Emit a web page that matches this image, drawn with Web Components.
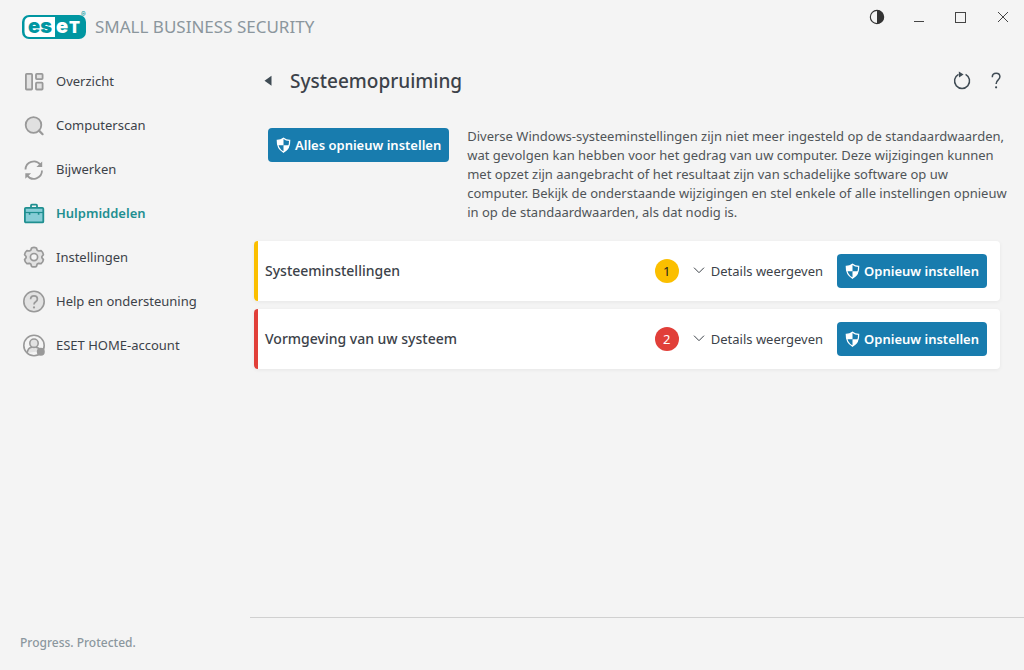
<!DOCTYPE html>
<html lang="nl">
<head>
<meta charset="utf-8">
<meta name="viewport" content="width=device-width, initial-scale=1">
<title>ESET Small Business Security</title>
<style>
  html, body { height: 100%; }
  body { margin: 0; background: #f4f4f4; color: #3c4249; font: 13px/19px "Noto Sans", "Open Sans", sans-serif; }
</style>
</head>
<body>
<app-window>
  <title-bar slot="header"></title-bar>

  <side-nav slot="nav">
    <nav-item icon="overview">Overzicht</nav-item>
    <nav-item icon="scan">Computerscan</nav-item>
    <nav-item icon="update">Bijwerken</nav-item>
    <nav-item icon="tools" active>Hulpmiddelen</nav-item>
    <nav-item icon="settings">Instellingen</nav-item>
    <nav-item icon="help">Help en ondersteuning</nav-item>
    <nav-item icon="account">ESET HOME-account</nav-item>
  </side-nav>

  <page-heading>Systeemopruiming</page-heading>
  <intro-block action="Alles opnieuw instellen">Diverse Windows-systeeminstellingen zijn niet meer ingesteld op de standaardwaarden, wat gevolgen kan hebben voor het gedrag van uw computer. Deze wijzigingen kunnen met opzet zijn aangebracht of het resultaat zijn van schadelijke software op uw computer. Bekijk de onderstaande wijzigingen en stel enkele of alle instellingen opnieuw in op de standaardwaarden, als dat nodig is.</intro-block>
  <setting-card level="warning" count="1">Systeeminstellingen</setting-card>
  <setting-card level="danger" count="2">Vormgeving van uw systeem</setting-card>

  <span slot="tagline">Progress. Protected.</span>
</app-window>

<script>
const ICONS = {
  overview: `<g fill="#e2e2e2" stroke="#999" stroke-width="1.8"><rect x="3.900" y="4.900" width="6.200" height="15.600" rx=".8"/><rect x="14" y="4.900" width="6.600" height="5.200" rx=".8"/><rect x="14" y="13.600" width="6.600" height="6.900" rx=".8"/></g>`,
  scan: `<circle cx="11.500" cy="12" r="7.800" fill="#e0e0e0" stroke="#999" stroke-width="1.800"/><path d="M17 17.600l3.600 3.600" stroke="#999" stroke-width="2.200" stroke-linecap="round"/>`,
  update: `<g fill="none" stroke="#999" stroke-width="1.800"><path d="M3.500 12.500A8.300 8.300 0 0 1 18.300 7.600"/><path d="M20 13.500A8.300 8.300 0 0 1 5.200 18.600"/></g><path d="M20.200 4.400v5.600h-5.800zM3.300 21.800v-5.600h5.800z" fill="#999"/>`,
  tools: `<path d="M9 7V4.500q0-.8.8-.8h4.400q.8 0 .8.800V7" fill="none" stroke="#1f8f90" stroke-width="1.800"/><rect x="2.900" y="6.800" width="18.400" height="14.600" rx="1" fill="#87cdd6" stroke="#1f8f90" stroke-width="1.800"/><path d="M3 11.500h18" stroke="#1f8f90" stroke-width="1.200"/><path d="M7.600 11v2.800M16.600 11v2.800" stroke="#1f8f90" stroke-width="1.600"/>`,
  settings: `<path d="M9.600 2.900q2.400-1.200 4.800 0l.8 2.300 1.400.8 2.500-.4q2 1.600 2.300 4.100L19.900 11.500v1.200l1.500 1.900q-.3 2.500-2.300 4.100l-2.500-.4-1.400.8-.8 2.300q-2.400 1.100-4.800 0l-.8-2.300-1.400-.8-2.500.4q-2-1.600-2.300-4.100l1.500-1.900v-1.200L2.600 9.700q.3-2.500 2.300-4.100l2.500.4 1.400-.8z" fill="#e2e2e2" stroke="#999" stroke-width="1.700" stroke-linejoin="round"/><circle cx="12" cy="12.100" r="3.600" fill="#f4f4f4" stroke="#999" stroke-width="1.700"/>`,
  help: `<circle cx="12" cy="12.500" r="10.200" fill="#e2e2e2" stroke="#999" stroke-width="1.600"/><path d="M8.600 10.300q0-3.400 3.400-3.400 3.400 0 3.400 3 0 1.600-1.700 2.800-1.700 1.100-1.700 2.800" fill="none" stroke="#999" stroke-width="1.700"/><circle cx="12" cy="18.400" r="1.100" fill="#999"/>`,
  account: `<circle cx="12" cy="12.500" r="10.200" fill="#f4f4f4" stroke="#999" stroke-width="1.600"/><path d="M5.200 20q.6-5.400 4.700-5.800h4.200q3.400.3 4.500 3.800" fill="#e2e2e2" stroke="#999" stroke-width="1.600"/><circle cx="12" cy="10.200" r="4.200" fill="#e2e2e2" stroke="#999" stroke-width="1.600"/><circle cx="18.800" cy="18.800" r="4" fill="#999"/>`,
  shield: `<path d="M12 1.800Q8.500 4.600 3.300 4.800q-.5 11.600 8.700 16.600 9.200-5 8.700-16.600-5.200-.2-8.700-3z" fill="none" stroke="#fff" stroke-width="1.800"/><path d="M12 1.800V11.500H3.800Q3.200 8.500 3.300 4.800 8.500 4.600 12 1.800z" fill="#fff"/><path d="M12 11.500h8.200q-1.200 6.900-8.200 9.900z" fill="#fff"/>`,
  chevron: `<path d="M4.500 7L12 14.500 19.500 7" fill="none" stroke="currentColor" stroke-width="1.500"/>`,
  back: `<path d="M18 3v17L6 11.500z" fill="#3f4b54"/>`,
  contrast: `<circle cx="12" cy="12" r="10" fill="none" stroke="#333" stroke-width="1.700"/><path d="M12 2a10 10 0 0 1 0 20z" fill="#333"/>`,
  minimize: `<path d="M7 16.500h10" stroke="#444"/>`,
  maximize: `<rect x="6.500" y="7.500" width="10" height="10" fill="none" stroke="#444"/>`,
  close: `<path d="M7 7l10 10M17 7L7 17" stroke="#444"/>`,
  refresh: `<path d="M15.600 5.300A7.500 7.500 0 1 1 8.500 5.300" fill="none" stroke="#3f4b54" stroke-width="1.500"/><path d="M8.800 2.600L13.600 5.500 9 8.600z" fill="#3f4b54"/>`,
  question: `<path d="M8.300 8.200q0-3.900 3.900-3.900 3.700 0 3.700 3.500 0 1.600-1.700 3-2.100 1.700-2.100 4.300" fill="none" stroke="#3f4b54" stroke-width="1.500"/><circle cx="12.100" cy="18.300" r="1.100" fill="#3f4b54"/>`
};

const BASE = `*{box-sizing:border-box} button{font:inherit;color:inherit;background:none;border:0;padding:0;margin:0;cursor:pointer}`;

class BaseElement extends HTMLElement {
  connectedCallback() {
    if (this.shadowRoot) return;
    this.attachShadow({ mode: "open" }).innerHTML = `<style>${BASE}${this.styles()}</style>${this.markup()}`;
  }
  styles() { return ""; }
  markup() { return "<slot></slot>"; }
}

class UiIcon extends BaseElement {
  styles() { return `:host{display:inline-flex;flex:none;width:24px;height:24px} svg{display:block;width:100%;height:100%}`; }
  markup() { return `<svg viewBox="0 0 24 24" fill="none" aria-hidden="true">${ICONS[this.getAttribute("name")]}</svg>`; }
}

class AppWindow extends BaseElement {
  styles() { return `
    :host{display:grid;grid-template:"head head" auto "nav main" 1fr "foot main" auto / 250px minmax(0,1fr);min-height:100vh}
    header{grid-area:head}
    aside{grid-area:nav}
    .main{grid-area:main;display:flex;flex-direction:column}
    main{flex:1;display:flex;flex-direction:column;gap:8px;padding:0 24px 0 4px}
    .rule{height:53px;border-top:1px solid #d0d0d0}
    footer{grid-area:foot;padding:0 20px 18px;color:#8b979e;font:500 12px/18px "Noto Sans",sans-serif}`; }
  markup() { return `
    <header><slot name="header"></slot></header>
    <aside><slot name="nav"></slot></aside>
    <div class="main"><main><slot></slot></main><div class="rule"></div></div>
    <footer><slot name="tagline"></slot></footer>`; }
}

class BrandLogo extends BaseElement {
  styles() { return `
    :host{display:flex;align-items:center;gap:7px;color:#8b969d;font:17px/24px "Noto Sans",sans-serif}
    svg{display:block;width:66px;height:34px;flex:none}
    text{font-family:Inter,sans-serif;font-weight:900}`; }
  markup() { return `
    <svg viewBox="0 0 66 34" role="img" aria-label="ESET">
      <rect x="0" y="5" width="64" height="24" rx="7" fill="#0096a1"/>
      <path d="M33 7H8q-5.500 0-5.500 5.500v9q0 5.500 5.500 5.500h25z" fill="#fff"/>
      <text x="6" y="23" font-size="20" fill="#0096a1">es</text>
      <text x="34" y="23" font-size="20" fill="#fff">e</text>
      <text x="47" y="23" font-size="16" fill="#fff">T</text>
      <text x="59" y="7" font-size="7" fill="#0096a1" style="font-weight:600">®</text>
    </svg><span>SMALL BUSINESS SECURITY</span>`; }
}

class TitleBar extends BaseElement {
  styles() { return `
    :host{display:flex;justify-content:space-between;align-items:flex-start;height:59px;padding:0 9px 0 22px}
    brand-logo{margin-top:10px}
    .controls{display:flex;gap:18px;padding-top:5px}
    button{display:flex;width:24px;height:24px;align-items:center;justify-content:center}
    .small{width:16px;height:16px}`; }
  markup() { return `
    <brand-logo></brand-logo>
    <div class="controls">
      <button aria-label="Thema"><ui-icon class="small" name="contrast"></ui-icon></button>
      <button aria-label="Minimaliseren"><ui-icon name="minimize"></ui-icon></button>
      <button aria-label="Maximaliseren"><ui-icon name="maximize"></ui-icon></button>
      <button aria-label="Sluiten"><ui-icon name="close"></ui-icon></button>
    </div>`; }
}

class SideNav extends BaseElement {
  styles() { return `:host{display:block} nav{display:flex;flex-direction:column}`; }
  markup() { return `<nav aria-label="Hoofdmenu"><slot></slot></nav>`; }
}

class NavItem extends BaseElement {
  styles() { return `
    :host{display:block}
    a{display:flex;align-items:center;gap:10px;height:44px;padding-left:22px;color:inherit;text-decoration:none}
    :host([active]) a{color:#1f8f90;font-weight:600}`; }
  markup() { return `<a href="#"${this.hasAttribute("active") ? ' aria-current="page"' : ""}><ui-icon name="${this.getAttribute("icon")}"></ui-icon><span><slot></slot></span></a>`; }
}

class PageHeading extends BaseElement {
  styles() { return `
    :host{display:flex;align-items:center;height:44px;margin-right:-8px}
    button{display:flex}
    .back{padding:0 11px 0 7px}
    .back ui-icon{width:14px;height:14px}
    h1{flex:1;margin:0 0 0 4px;font-size:19px;line-height:28px;font-weight:500}
    .tools{display:flex;gap:10px}`; }
  markup() { return `
    <button class="back" aria-label="Terug"><ui-icon name="back"></ui-icon></button>
    <h1><slot></slot></h1>
    <div class="tools">
      <button aria-label="Vernieuwen"><ui-icon name="refresh"></ui-icon></button>
      <button aria-label="Help"><ui-icon name="question"></ui-icon></button>
    </div>`; }
}

class ShieldButton extends BaseElement {
  styles() { return `
    :host{display:block;flex:none}
    button{display:flex;align-items:center;gap:3px;height:34px;padding:0 8px 0 7px;border-radius:4px;background:#187cae;color:#fff;font-weight:600;white-space:nowrap}
    ui-icon{width:17px;height:17px}`; }
  markup() { return `<button><ui-icon name="shield"></ui-icon><span><slot></slot></span></button>`; }
}

class IntroBlock extends BaseElement {
  styles() { return `
    :host{display:flex;align-items:flex-start;gap:18px;padding:16px 0 11px 14px;margin-right:-8px}
    shield-button{padding-top:1px}
    p{margin:0;flex:1;color:#505458}`; }
  markup() { return `<shield-button>${this.getAttribute("action")}</shield-button><p><slot></slot></p>`; }
}

class SettingCard extends BaseElement {
  styles() { return `
    :host{--accent:#fbbf00;--on-accent:#222;display:flex;align-items:center;height:60px;padding:0 13px 0 7px;border-left:4px solid var(--accent);border-radius:4px;background:#fff;box-shadow:0 1px 4px rgba(0,0,0,.06)}
    :host([level=danger]){--accent:#e13f39;--on-accent:#fff}
    h2{flex:1;margin:0;font-size:14px;line-height:20px;font-weight:500}
    .count{width:24px;height:24px;border-radius:50%;background:var(--accent);color:var(--on-accent);line-height:24px;text-align:center}
    .details{display:flex;align-items:center;gap:4px;margin:0 14px 0 12px}
    .details ui-icon{width:16px;height:16px}`; }
  markup() { return `
    <h2><slot></slot></h2>
    <span class="count">${this.getAttribute("count")}</span>
    <button class="details" aria-expanded="false"><ui-icon name="chevron"></ui-icon><span>Details weergeven</span></button>
    <shield-button>Opnieuw instellen</shield-button>`; }
}

customElements.define("ui-icon", UiIcon);
customElements.define("brand-logo", BrandLogo);
customElements.define("title-bar", TitleBar);
customElements.define("side-nav", SideNav);
customElements.define("nav-item", NavItem);
customElements.define("page-heading", PageHeading);
customElements.define("shield-button", ShieldButton);
customElements.define("intro-block", IntroBlock);
customElements.define("setting-card", SettingCard);
customElements.define("app-window", AppWindow);
</script>
</body>
</html>
